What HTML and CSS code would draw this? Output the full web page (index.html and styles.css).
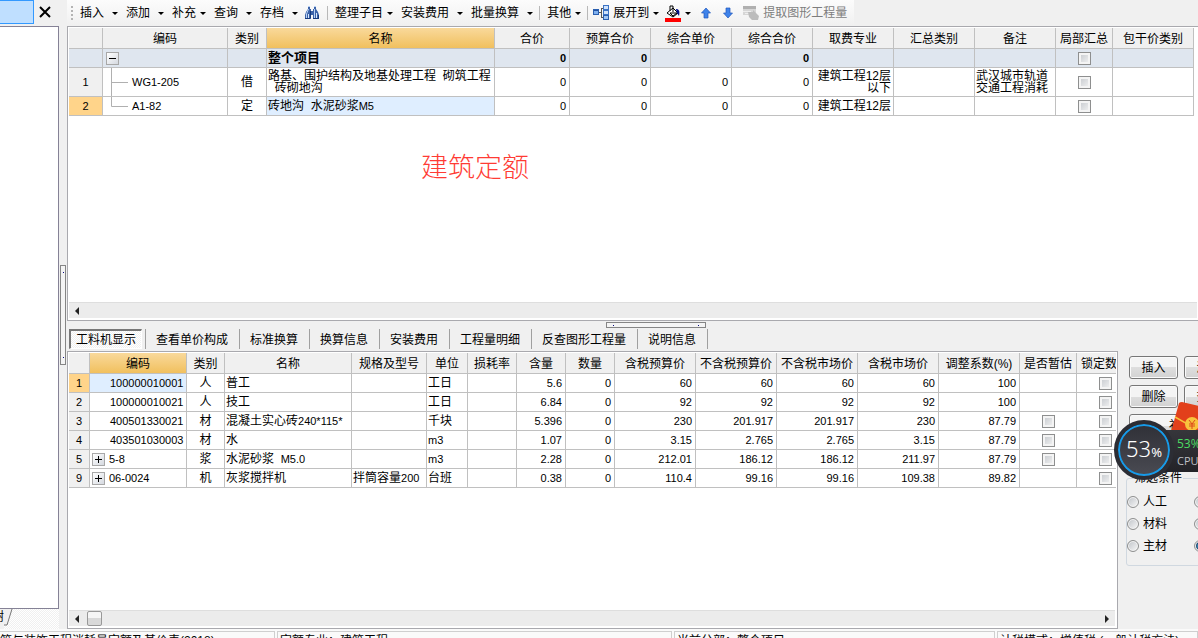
FILE: index.html
```html
<!DOCTYPE html>
<html lang="zh-CN">
<head>
<meta charset="utf-8">
<title>工程计价</title>
<link rel="stylesheet" href="styles.css">
</head>
<body>
<div class="app">
<div class="workspace">
  <aside class="nav">
    <div class="nav-head">
      <span class="nav-tab"></span>
      <button class="close" aria-label="关闭"><svg width="12" height="12" viewBox="0 0 12 12"><path d="M1 1L11 11M11 1L1 11" stroke="#000" stroke-width="2" fill="none"/></svg></button>
    </div>
    <div class="nav-body"></div>
    <div class="nav-foot"><span class="foot-label">树</span><svg width="9" height="18" viewBox="0 0 9 18"><path d="M0 0H8L3 16H0Z" fill="#f0f0f0"/><path d="M8 0L3 16H0" fill="none" stroke="#777"/></svg></div>
  </aside>
  <div class="gutter"><div class="grip grip-v"><i></i><i></i></div></div>
  <main class="main">
    <div class="toolbar">
      <span class="handle"></span>
      <button class="tool loose">插入<i class="arrow"></i></button>
      <button class="tool loose">添加<i class="arrow"></i></button>
      <button class="tool">补充<i class="arrow"></i></button>
      <button class="tool loose">查询<i class="arrow"></i></button>
      <button class="tool loose last">存档<i class="arrow"></i></button>
      <button class="icon-tool" aria-label="查找"><svg width="16" height="16" viewBox="0 0 16 16"><path d="M4 1h2v3h1v2h2V4h1V1h2v3l2 3 1 3v4H9v-4H7v4H1v-4l1-3 2-3z" fill="#3b62a8"/><path d="M4 1.500h2M10 1.500h2M4.500 4l-2 5v4M10.500 4v3l0 6" stroke="#b9d2f5" fill="none"/><path d="M4.500 9v4M12.500 8v5" stroke="#d9e8fb" fill="none"/><path d="M6.500 6v7M14.500 10v4M1 13.500h5M9 13.500h5" stroke="#173a7c" fill="none"/></svg></button>
      <span class="sep"></span>
      <button class="tool">整理子目<i class="arrow"></i></button>
      <button class="tool loose">安装费用<i class="arrow"></i></button>
      <button class="tool loose last">批量换算<i class="arrow"></i></button>
      <span class="sep"></span>
      <button class="tool last">其他<i class="arrow"></i></button>
      <span class="sep narrow"></span>
      <button class="tool last">
        <svg width="16" height="16" viewBox="0 0 16 16"><path d="M5 7.500h3M8.500 3v9M8 3.500h3M8 12.500h3" stroke="#555" fill="none"/><rect x=".5" y="4.500" width="5" height="5" fill="#7fb0ee" stroke="#2a5fb0"/><path d="M1 5.500h4" stroke="#2352a0"/><rect x="10.500" y=".5" width="5" height="4" fill="#cfe2fb" stroke="#3a72c4"/><rect x="10.500" y="5.500" width="5" height="4" fill="#cfe2fb" stroke="#3a72c4"/><rect x="10.500" y="10.500" width="5" height="4" fill="#9fc5f4" stroke="#2a5fb0"/></svg>展开到<i class="arrow"></i></button>
      <button class="tool" aria-label="填充颜色"><svg width="16" height="17" viewBox="0 0 16 17"><path d="M8 3l5 5-5 4-6-4z" fill="#fff" stroke="#000"/><path d="M5 6V1h3v6M5 8l3 3 4-3z" fill="none" stroke="#000"/><path d="M11 4c3 0 4 2 3 7l-2-3z" fill="#00108c"/><rect y="13" width="16" height="4" fill="#f00"/></svg><i class="arrow"></i></button>
      <button class="icon-tool arrow-tool" aria-label="上移"><svg width="10" height="12" viewBox="0 0 10 12"><path d="M5 1L9.500 6H7v5H3V6H.5z" fill="#3f83ea" stroke="#1f56bd" stroke-width=".7"/></svg></button>
      <button class="icon-tool arrow-tool" aria-label="下移"><svg width="10" height="12" viewBox="0 0 10 12"><path d="M5 11L9.500 6H7V1H3v5H.5z" fill="#3f83ea" stroke="#1f56bd" stroke-width=".7"/></svg></button>
      <button class="tool muted" disabled><svg width="16" height="16" viewBox="0 0 16 16"><path d="M0 1h13v9H0z" fill="#d6d6d6"/><path d="M0 1h13v3H0z" fill="#b0b0b0"/><path d="M0 6.500h8M2 8.500h5" stroke="#eee"/><path d="M5 7h5V5l6 6-1 4H9l-3-3z" fill="#bcbcbc"/></svg>提取图形工程量</button>
    </div>

    <section class="pane">
      <div class="pane-body">
      <table class="grid">
        <colgroup><col class="w34"><col class="w125"><col class="w39"><col class="w228"><col class="w75"><col class="w81"><col class="w81"><col class="w81"><col class="w81"><col class="w81"><col class="w81"><col class="w57"><col class="w81"></colgroup>
        <thead><tr><th></th><th>编码</th><th>类别</th><th class="gold">名称</th><th>合价</th><th>预算合价</th><th>综合单价</th><th>综合合价</th><th>取费专业</th><th>汇总类别</th><th>备注</th><th>局部汇总</th><th>包干价类别</th></tr></thead>
        <tbody>
        <tr class="total"><th></th><td><div class="tree"><button class="toggle root" aria-label="折叠"><svg width="9" height="9" viewBox="0 0 9 9"><path d="M1 4.500h7" stroke="#000"/></svg></button></div></td><td></td><td>整个项目</td><td class="n">0</td><td class="n">0</td><td></td><td class="n">0</td><td></td><td></td><td></td><td class="c"><input type="checkbox" aria-label="局部汇总 整个项目"></td><td></td></tr>
        <tr class="tall"><th>1</th><td class="code"><div class="tree"><svg width="25" height="28" viewBox="0 0 25 28"><path d="M8.500 0V28M8.500 14.500H25" stroke="#b0b0b0" fill="none"/></svg><span class="num branch">WG1-205</span></div></td><td class="c">借</td><td>路基、围护结构及地基处理工程&nbsp; 砌筑工程<br>&nbsp; 砖砌地沟</td><td class="n">0</td><td class="n">0</td><td class="n">0</td><td class="n">0</td><td class="r">建筑工程12层<br>以下</td><td></td><td>武汉城市轨道<br>交通工程消耗</td><td class="c"><input type="checkbox" aria-label="局部汇总 1"></td><td></td></tr>
        <tr><th class="hot">2</th><td class="code"><div class="tree"><svg width="25" height="18" viewBox="0 0 25 18"><path d="M8.500 0V9.500H25" stroke="#b0b0b0" fill="none"/></svg><span class="num branch">A1-82</span></div></td><td class="c">定</td><td class="picked">砖地沟&nbsp; 水泥砂浆<span class="num">M5</span></td><td class="n">0</td><td class="n">0</td><td class="n">0</td><td class="n">0</td><td class="r">建筑工程12层</td><td></td><td></td><td class="c"><input type="checkbox" aria-label="局部汇总 2"></td><td></td></tr>
        </tbody>
      </table>
      <p class="note">建筑定额</p>
      </div>
      <div class="scroll"><i class="tri left"></i></div>
    </section>

    <nav class="tabs">
      <button class="tab active">工料机显示</button>
      <button class="tab">查看单价构成</button>
      <button class="tab">标准换算</button>
      <button class="tab">换算信息</button>
      <button class="tab">安装费用</button>
      <button class="tab">工程量明细</button>
      <button class="tab">反查图形工程量</button>
      <button class="tab">说明信息</button>
      <div class="grip grip-h"><i></i><i></i></div>
    </nav>

    <div class="lower">
      <section class="pane boxed">
        <div class="pane-body">
        <table class="grid">
          <colgroup><col class="w21"><col class="w97"><col class="w38"><col class="w127"><col class="w75"><col class="w41"><col class="w49"><col class="w49"><col class="w49"><col class="w81"><col class="w81"><col class="w81"><col class="w81"><col class="w81"><col class="w57"><col class="w57"></colgroup>
          <thead><tr><th></th><th class="gold">编码</th><th>类别</th><th>名称</th><th>规格及型号</th><th>单位</th><th>损耗率</th><th>含量</th><th>数量</th><th>含税预算价</th><th>不含税预算价</th><th>不含税市场价</th><th>含税市场价</th><th>调整系数(%)</th><th>是否暂估</th><th>锁定数量</th></tr></thead>
          <tbody>
          <tr><th class="hot">1</th><td class="picked code"><span class="num indent">100000010001</span></td><td class="c">人</td><td>普工</td><td></td><td>工日</td><td></td><td class="n">5.6</td><td class="n">0</td><td class="n">60</td><td class="n">60</td><td class="n">60</td><td class="n">60</td><td class="n">100</td><td></td><td class="c"><input type="checkbox" aria-label="锁定数量 1"></td></tr>
          <tr><th>2</th><td class="code"><span class="num indent">100000010021</span></td><td class="c">人</td><td>技工</td><td></td><td>工日</td><td></td><td class="n">6.84</td><td class="n">0</td><td class="n">92</td><td class="n">92</td><td class="n">92</td><td class="n">92</td><td class="n">100</td><td></td><td class="c"><input type="checkbox" aria-label="锁定数量 2"></td></tr>
          <tr><th>3</th><td class="code"><span class="num indent">400501330021</span></td><td class="c">材</td><td>混凝土实心砖<span class="num">240*115*</span></td><td></td><td>千块</td><td></td><td class="n">5.396</td><td class="n">0</td><td class="n">230</td><td class="n">201.917</td><td class="n">201.917</td><td class="n">230</td><td class="n">87.79</td><td class="c"><input type="checkbox" aria-label="是否暂估 3"></td><td class="c"><input type="checkbox" aria-label="锁定数量 3"></td></tr>
          <tr><th>4</th><td class="code"><span class="num indent">403501030003</span></td><td class="c">材</td><td>水</td><td></td><td><span class="num">m3</span></td><td></td><td class="n">1.07</td><td class="n">0</td><td class="n">3.15</td><td class="n">2.765</td><td class="n">2.765</td><td class="n">3.15</td><td class="n">87.79</td><td class="c"><input type="checkbox" aria-label="是否暂估 4"></td><td class="c"><input type="checkbox" aria-label="锁定数量 4"></td></tr>
          <tr><th>5</th><td class="code"><div class="tree"><button class="toggle" aria-label="展开"><svg width="9" height="9" viewBox="0 0 9 9"><path d="M1 4.500h7M4.500 1v7" stroke="#000"/></svg></button><span class="num">5-8</span></div></td><td class="c">浆</td><td>水泥砂浆&nbsp; <span class="num">M5.0</span></td><td></td><td><span class="num">m3</span></td><td></td><td class="n">2.28</td><td class="n">0</td><td class="n">212.01</td><td class="n">186.12</td><td class="n">186.12</td><td class="n">211.97</td><td class="n">87.79</td><td class="c"><input type="checkbox" aria-label="是否暂估 5"></td><td class="c"><input type="checkbox" aria-label="锁定数量 5"></td></tr>
          <tr><th>9</th><td class="code"><div class="tree"><button class="toggle" aria-label="展开"><svg width="9" height="9" viewBox="0 0 9 9"><path d="M1 4.500h7M4.500 1v7" stroke="#000"/></svg></button><span class="num">06-0024</span></div></td><td class="c">机</td><td>灰浆搅拌机</td><td>拌筒容量<span class="num">200</span></td><td>台班</td><td></td><td class="n">0.38</td><td class="n">0</td><td class="n">110.4</td><td class="n">99.16</td><td class="n">99.16</td><td class="n">109.38</td><td class="n">89.82</td><td></td><td class="c"><input type="checkbox" aria-label="锁定数量 9"></td></tr>
          </tbody>
        </table>
        </div>
        <div class="scroll"><i class="tri left"></i><i class="thumb"></i><i class="tri right"></i></div>
      </section>
      <aside class="side">
        <div class="actions">
          <button class="btn">插入</button><button class="btn">添加</button>
          <button class="btn">删除</button><button class="btn">查询</button>
          <button class="btn wide">补充</button>
          <button class="btn wide" aria-label="修改价格"></button>
        </div>
        <fieldset class="filter">
          <legend>筛选条件</legend>
          <label><input type="radio" name="kind">人工</label><input type="radio" name="kind" aria-label="机械">
          <label><input type="radio" name="kind">材料</label><input type="radio" name="kind" aria-label="设备">
          <label><input type="radio" name="kind">主材</label><input type="radio" name="kind" aria-label="所有" checked>
        </fieldset>
      </aside>
      <div class="monitor">
        <svg class="packet" width="28" height="30" viewBox="0 0 28 30"><path d="M8 1Q9 0 11 0L28 4V30H0z" fill="#e2401b"/><path d="M4 15L18 23L28 19" fill="none" stroke="#f7c23c" stroke-width="1.500"/><circle cx="21" cy="22" r="7" fill="#f8c33d"/><path d="M18 18l3 4 3-4M21 22v5M18 22h6M18 24h6" stroke="#dc4a1c" fill="none"/></svg>
        <div class="meter"><span class="green">53%</span><span class="cpu">CPU</span></div>
        <div class="dial"><span class="big">53</span><span class="pct">%</span></div>
      </div>
    </div>
  </main>
</div>
<footer class="status"><span class="s1">筑与装饰工程消耗量定额及基价表(2018)</span><span class="s2">定额专业：建筑工程</span><span class="s3">当前分部：整个项目</span><span class="s4">计税模式：增值税&nbsp;(一般计税方法)</span></footer>
</div>
</body>
</html>
```
FILE: styles.css
```css
* { box-sizing: border-box; }
body {
  margin: 0;
  font: 12px/14px "Liberation Sans", "Noto Sans CJK SC", sans-serif;
  color: #000;
  background: #f0f0f0;
}
button { margin: 0; padding: 0; border: 0; background: none; font: inherit; color: inherit; }
svg { display: block; flex: none; }
.app { height: 100vh; display: flex; flex-direction: column; overflow: hidden; }
.workspace { flex: 1; min-height: 0; display: grid; grid-template-columns: 59px 8px minmax(0, 1fr); }

/* left navigation */
.nav { display: grid; grid-template-rows: 26px 1fr 20px; min-width: 0; }
.nav-head { display: flex; align-items: flex-start; gap: 5px; }
.nav-tab { width: 34px; height: 24px; background: #bfdfff; border: 1px solid #3399ff; border-width: 1px 1px 1px 0; }
.close { padding: 6px 0; }
.nav-body { background: #fff; border: solid #858296; border-width: 1px 1px 1px 0; }
.nav-foot { display: flex; overflow: hidden; background: repeating-conic-gradient(#fff 0 25%, #f0f0f0 0 50%) 0 0 / 2px 2px; }
.foot-label { width: 4px; line-height: 17px; display: flex; justify-content: flex-end; background: #f0f0f0; }
.gutter { display: flex; flex-direction: column; align-items: center; justify-content: center; }
.grip { display: flex; align-items: center; justify-content: space-between; border: 1px solid #858585; background: #f4f4f4; }
.grip i { width: 1px; height: 1px; background: #0a0a80; }
.grip-v { flex-direction: column; width: 6px; height: 100px; padding: 6px 0; }
.grip-h { position: absolute; left: 539px; top: 1px; width: 100px; height: 6px; padding: 0 6px; }

/* toolbar */
.main { min-width: 0; display: grid; grid-template-rows: 26px 295fr 30px 278fr; }
.toolbar {
  display: flex; align-items: center; padding-left: 4px; width: 787px; white-space: nowrap;
  background: linear-gradient(#fcfcfc, #f0f0f0);
}
.handle { width: 2px; height: 14px; margin-right: 7px; background: repeating-linear-gradient(#b4b4b4 0 2px, transparent 2px 4px); }
.tool { display: flex; align-items: center; gap: 4px; margin-right: 9px; flex: none; }
.tool.loose { gap: 8px; }
.tool.last { margin-right: 7px; }
.arrow { border: solid transparent; border-width: 3px 3px 0; border-top-color: #000; width: 6px; margin-right: -1px; }
.icon-tool { margin-right: 7px; }
.arrow-tool { margin: 0 10px 0 2px; }
.sep { width: 1px; height: 14px; margin-right: 7px; background: #b8b8b8; }
.sep.narrow { margin-right: 5px; }
.muted { color: #7d7d7d; margin: 0; }

/* panes and grids */
.pane { min-height: 0; min-width: 0; display: flex; flex-direction: column; padding: 1px 0 1px 1px; background: #fff; border: solid #a9a9ae; border-width: 1px 0 1px 1px; overflow: hidden; }
.pane.boxed { border-right-width: 1px; padding-right: 1px; }
.pane-body { flex: 1; min-height: 0; overflow: hidden; }
.grid { table-layout: fixed; width: 0; border-collapse: separate; border-spacing: 0; line-height: 12px; white-space: nowrap; }
.w21 { width: 21px; } .w34 { width: 34px; } .w38 { width: 38px; } .w39 { width: 39px; }
.w41 { width: 41px; } .w49 { width: 49px; } .w57 { width: 57px; } .w75 { width: 75px; }
.w81 { width: 81px; } .w97 { width: 97px; } .w125 { width: 125px; } .w127 { width: 127px; } .w228 { width: 228px; }
.grid th, .grid td { height: 19px; padding: 0 2px 0 1px; border: solid #c0c0c0; border-width: 0 1px 1px 0; overflow: hidden; text-align: left; font-weight: 400; }
.grid th { background: #f0f0f0; text-align: center; padding: 0; }
.grid thead th { height: 21px; padding-top: 2px; }
.grid tbody th { font-size: 11px; }
.grid thead th.gold { background: linear-gradient(#f9d99b, #f1c05e); }
.grid th.hot { background: #ffd48a; }
.grid .tall td { height: 29px; }
.grid .picked { background: #dfeeff; }
.grid .c { text-align: center; padding: 0; }
.grid .r { text-align: right; }
.grid .n { text-align: right; padding-right: 3px; font-size: 11px; }
.total td { background: #dfe6ef; font-size: 13px; }
.grid .total td { font-weight: 700; }
.total th { background: #dfe6ef; }
.num { font-size: 11px; }
.grid td.code { padding: 0; }
.indent { padding-left: 20px; }
.branch { padding-left: 4px; }
.tree { display: flex; align-items: center; }
.toggle { display: flex; margin: 0 4px 0 2px; border: 1px solid #a8a8a8; padding: 1px; background: linear-gradient(135deg, #fff, #d5d9e0); }
.toggle svg { width: 9px; height: 9px; }
input { appearance: none; margin: 0; }
input[type="checkbox"] { display: block; width: 13px; height: 13px; margin: 0 auto; border: 1px solid #8e8f8f; background: linear-gradient(135deg, #c3c7cc, #f5f5f5); box-shadow: inset 0 0 0 2px #f4f4f4; }
.note { margin: 36px 0 0 352px; font-size: 27px; font-weight: 300; line-height: 32px; color: #ff3b34; }
.scroll { flex: none; display: flex; align-items: center; height: 16px; margin: 0 1px 1px 0; background: #ececec; border-top: 1px solid #dedede; }
.tri { border: solid transparent; border-width: 4px 4px; }
.tri.left { border-right-color: #222; border-left-width: 0; margin: 0 8px 0 6px; }
.tri.right { border-left-color: #222; border-right-width: 0; margin: 0 6px 0 auto; }
.thumb { width: 15px; height: 15px; border: 1px solid #999; border-radius: 2px; background: linear-gradient(#f6f6f6 50%, #d9d9d9 50%); }

/* tab strip */
.tabs { position: relative; display: flex; align-items: center; padding: 6px 0 0 2px; }
.tab { height: 20px; padding: 1px 11px 0 10px; border-right: 1px solid #a0a0a0; white-space: nowrap; }
.tab.active { margin-right: 3px; padding: 1px 5px 0; border: 1px solid #fff; border-top: 2px solid #777; border-left: 2px solid #777; background: repeating-conic-gradient(#fff 0 25%, #f0f0f0 0 50%) 0 0 / 2px 2px; }
.tab.active + .tab { border-left: 1px solid #a0a0a0; }

/* lower area */
.lower { position: relative; min-height: 0; display: grid; grid-template-columns: minmax(0, 1fr) 80px; }
.side { padding: 5px 0 0 8px; min-width: 0; overflow: hidden; }
.actions { display: grid; grid-template-columns: 49px 49px; gap: 6px; padding-left: 3px; }
.btn { height: 23px; border: 1px solid #777; border-radius: 3px; background: linear-gradient(#f4f4f4 50%, #dedede 50%, #d2d2d2); box-shadow: inset 0 0 0 1px #fafafa; }
.btn.wide { grid-column: span 2; }
.filter { width: 124px; height: 95px; margin: 5px 0 0; padding: 6px 0 8px; border: 1px solid #d0d8e0; border-radius: 3px; display: grid; grid-template-columns: 67px 1fr; align-items: center; }
.filter legend { margin-left: 6px; padding: 0 1px; }
.filter label { display: flex; align-items: center; gap: 4px; }
input[type="radio"] { width: 12px; height: 12px; border: 1px solid #8e8f8f; border-radius: 50%; background: linear-gradient(135deg, #bfc3c8, #f8f8f8); box-shadow: inset 0 0 0 1px #f4f4f4; }
input[type="radio"]:checked { background: radial-gradient(#4fc0ee 0 1px, #143a62 4px, #e8eef4 5px); }

/* floating system monitor */
.monitor { position: absolute; right: 0; top: 51px; width: 84px; height: 78px; }
.packet { position: absolute; right: -1px; top: 0; }
.meter { position: absolute; right: 0; top: 28px; width: 54px; height: 42px; padding: 5px 0 0 33px; overflow: hidden; background: linear-gradient(#36363b, #232328); display: flex; flex-direction: column; line-height: 17px; }
.green { color: #4bdc62; font-family: "Open Sans", sans-serif; }
.cpu { color: #bfc0c6; font: 11px/17px "Open Sans", sans-serif; }
.dial { position: absolute; left: 0; top: 18px; width: 60px; height: 60px; border: 4px solid #2c2d34; border-radius: 50%; background: linear-gradient(#2f3037, #4a4b53); box-shadow: inset 0 0 0 2px #169bea; display: flex; align-items: baseline; justify-content: center; color: #fff; line-height: 48px; font-family: "Noto Sans", sans-serif; }
.big { font-size: 22px; font-weight: 300; }
.pct { font-size: 13px; }

/* status bar */
.status { flex: 0 0 9px; padding-top: 2px; display: grid; grid-template-columns: 275px 395px 321px 1fr; column-gap: 2px; overflow: hidden; background: #fafafa; }
.status span { height: 20px; padding: 0 2px; border: 1px solid #cfcfcf; line-height: 18px; white-space: nowrap; overflow: hidden; }
.status .s1 { padding: 0; border-left: 0; }
```
